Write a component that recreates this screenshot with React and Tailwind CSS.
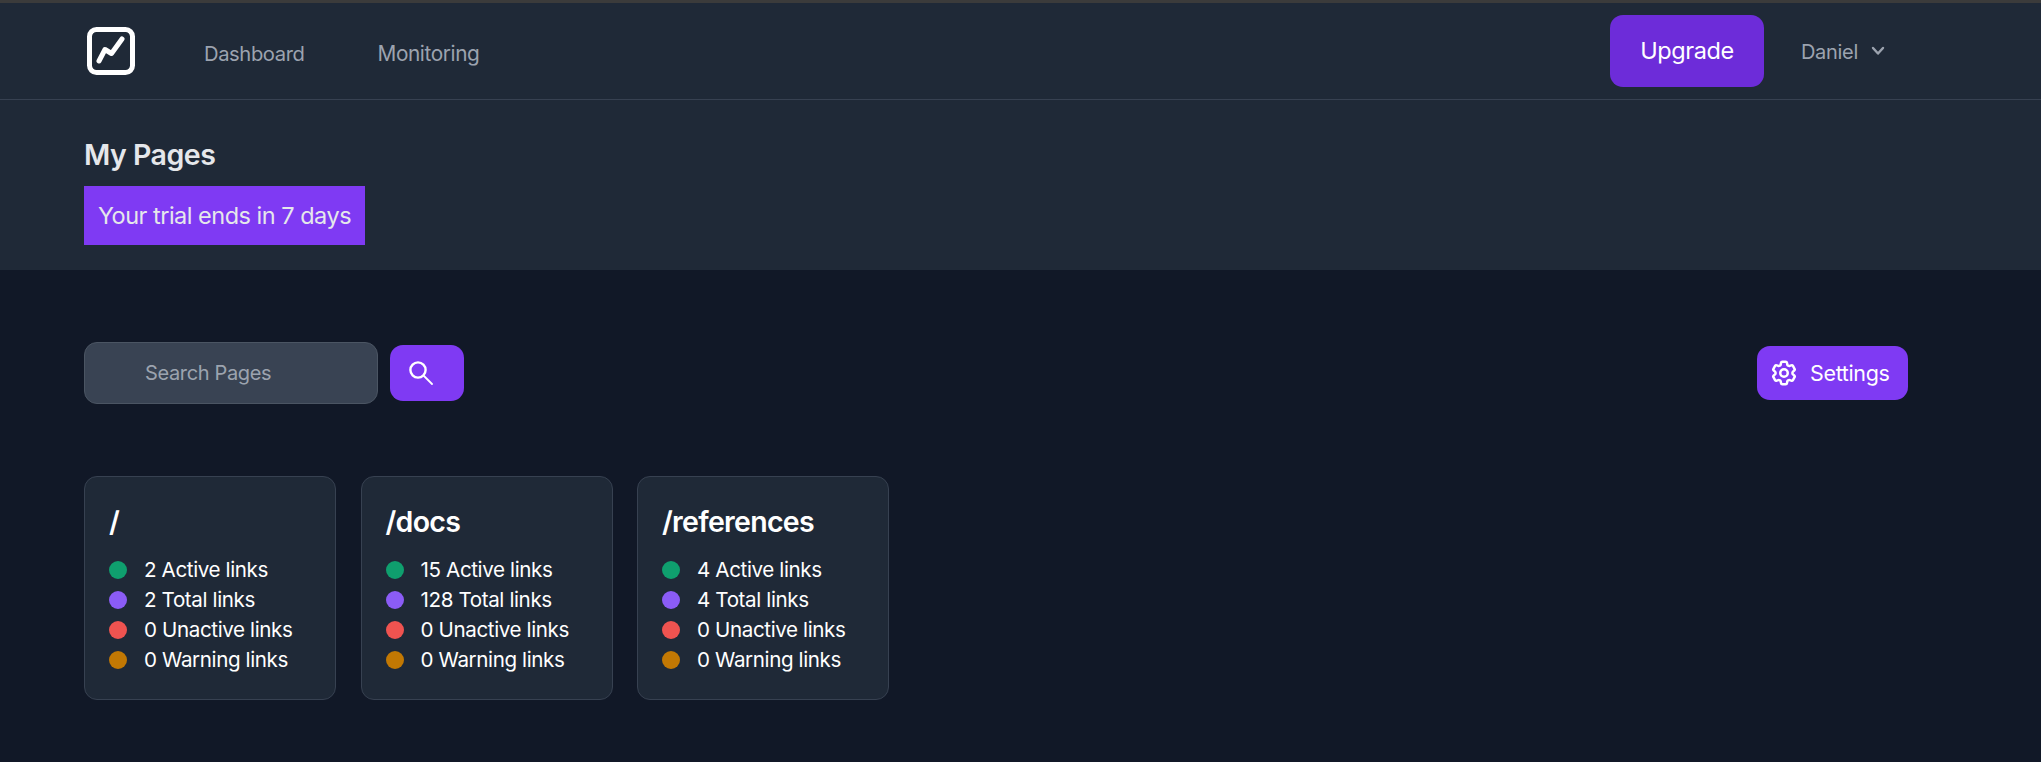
import React from "react";
import { HiOutlineCog6Tooth } from "react-icons/hi2";

const pages = [
  { path: "/", active: 2, total: 2 },
  { path: "/docs", active: 15, total: 128 },
  { path: "/references", active: 4, total: 4 },
];

const PageCard = ({ page }) => {
  const rows = [
    { label: `${page.active} Active links`, dot: "bg-[#0f9f6e]" },
    { label: `${page.total} Total links`, dot: "bg-[#8b5cf6]" },
    { label: "0 Unactive links", dot: "bg-[#ef5350]" },
    { label: "0 Warning links", dot: "bg-[#c27803]" },
  ];

  return (
    <div className="w-[252px] h-[224px] rounded-[13px] border border-[#374151] bg-[#1f2937] pl-[24px] pt-[25px]">
      <h2 className="h-[40px] text-[28.5px] leading-[40px] font-semibold text-white tracking-[-0.7px]">
        {page.path}
      </h2>
      <ul className="mt-[13px]">
        {rows.map((row) => (
          <li key={row.label} className="flex items-center h-[30px] text-white text-[20.6px] tracking-[-0.38px]">
            <span className={`w-[18px] h-[18px] rounded-full ${row.dot}`}></span>
            <span className="ml-[17px]">{row.label}</span>
          </li>
        ))}
      </ul>
    </div>
  );
};

const App = () => {
  return (
    <div className="min-h-[762px] bg-[#111827] font-['Inter',sans-serif]">
      <div className="h-[3px] bg-[#3b3b3b]"></div>
      <header className="bg-[#1f2937]">
        <nav className="flex items-center h-[97px] border-b border-[#374151] pl-[87px] pr-[156px]">
          <svg viewBox="0 0 48 48" className="w-[48px] h-[48px]" fill="none" stroke="white" strokeLinecap="round" strokeLinejoin="round">
            <rect x="2.5" y="2.5" width="43" height="43" rx="7" strokeWidth="5" />
            <polyline points="12,34 18,22.5 24.5,26.5 35,12" strokeWidth="5" />
          </svg>
          <a className="ml-[69px] mt-[6px] text-[#9ca3af] text-[20.2px] tracking-[-0.4px]">Dashboard</a>
          <a className="ml-[73px] mt-[6px] text-[#9ca3af] text-[20.8px] tracking-[-0.4px]">Monitoring</a>
          <div className="flex items-center ml-auto">
            <button className="w-[154px] h-[72px] rounded-[13px] bg-[#6d2cd9] text-white text-[23.5px] tracking-[-0.4px]">
              Upgrade
            </button>
            <span className="ml-[37px] mt-[1px] text-[#9ca3af] text-[20px] tracking-[-0.3px]">Daniel</span>
            <svg viewBox="0 0 14 10" className="ml-[13px] w-[14px] h-[10px]" fill="none" stroke="#9ca3af" strokeWidth="2.4" strokeLinecap="round" strokeLinejoin="round">
              <polyline points="2,2 7,7.5 12,2" />
            </svg>
          </div>
        </nav>
        <div className="pl-[84px] h-[170px] pt-[37px]">
          <h1 className="text-[28.5px] leading-[36px] font-semibold text-[#e5e7eb] tracking-[-0.5px]">My Pages</h1>
          <div className="mt-[13px] w-[281px] h-[59px] flex items-center justify-center bg-[#7f3af3] text-[#e5e7eb] text-[23.5px] tracking-[-0.5px]">
            Your trial ends in 7 days
          </div>
        </div>
      </header>
      <main className="pl-[84px] pr-[133px]">
        <div className="flex items-center mt-[72px]">
          <div className="w-[294px] h-[62px] flex items-center pl-[60px] rounded-[13px] border border-[#4b5563] bg-[#394353] text-[#9ca3af] text-[20px] tracking-[-0.35px]">
            <span>Search Pages</span>
          </div>
          <button className="ml-[12px] w-[74px] h-[56px] rounded-[13px] bg-[#7f3af3] flex items-center pl-[19px]">
            <svg viewBox="0 0 24 24" className="w-[24px] h-[24px]" fill="none" stroke="white" strokeLinecap="round">
              <circle cx="9" cy="9" r="7.6" strokeWidth="2.4" />
              <line x1="15" y1="15" x2="23" y2="23" strokeWidth="1.8" />
            </svg>
          </button>
          <button className="ml-auto w-[151px] h-[54px] rounded-[13px] bg-[#7f3af3] flex items-center pl-[12px] text-white text-[21.5px] tracking-[-0.35px]">
            <HiOutlineCog6Tooth className="w-[30px] h-[30px]" strokeWidth={2} />
            <span className="ml-[11px]">Settings</span>
          </button>
        </div>
        <div className="flex gap-[24.5px] mt-[72px]">
          {pages.map((page) => (
            <PageCard key={page.path} page={page} />
          ))}
        </div>
      </main>
    </div>
  );
};

export default App;
